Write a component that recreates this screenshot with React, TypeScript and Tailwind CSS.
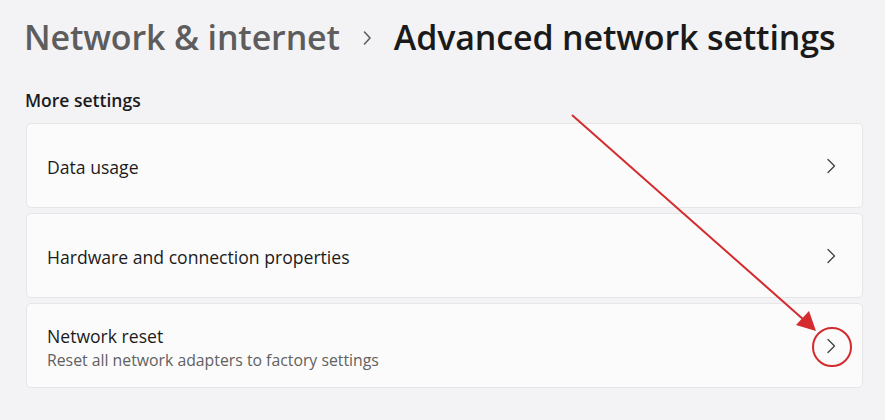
const Chevron = () => (
  <svg width="10" height="16" viewBox="0 0 10 16" className="shrink-0">
    <path d="M2 1.5 L8.5 8 L2 14.5" fill="none" stroke="#3b3b3b" strokeWidth="1.2" strokeLinecap="round" strokeLinejoin="round" />
  </svg>
);

const Row = ({ title, subtitle }: { title: string; subtitle?: string }) => (
  <div className="flex items-center h-[85px] bg-[#fbfbfb] border border-[#e6e6e6] rounded-[5px] pl-[20px] pr-[26px]">
    <div className="flex-1 flex flex-col pt-[3px]">
      <span className="text-[17.6px] leading-[22px] text-[#1b1b1b]">{title}</span>
      {subtitle && <span className="text-[15.8px] leading-[20px] text-[#616161] mt-[3px]">{subtitle}</span>}
    </div>
    <Chevron />
  </div>
);

export default function App() {
  return (
    <div
      className="relative w-[885px] h-[420px] overflow-hidden bg-[#f3f3f5] px-[26px]"
      style={{ fontFamily: '"Open Sans", "Noto Sans", sans-serif' }}
    >
      <div className="flex items-center h-[44px] mt-[15px] -ml-[2px] text-[34px] font-semibold tracking-[-0.15px]">
        <span className="text-[#5d5d5d]">Network &amp; internet</span>
        <svg width="10" height="16" viewBox="0 0 10 16" className="mx-[22px] mt-[2px]">
          <path d="M2.5 2 L8 8 L2.5 14" fill="none" stroke="#5d5d5d" strokeWidth="1.6" strokeLinecap="round" strokeLinejoin="round" />
        </svg>
        <span className="text-[#1a1a1a]">Advanced network settings</span>
      </div>
      <div className="mt-[30px] text-[17.5px] leading-[22px] font-semibold text-[#1b1b1b] -ml-[1px]">More settings</div>
      <div className="mt-[12px] flex flex-col gap-[5px] w-[837px]">
        <Row title="Data usage" />
        <Row title="Hardware and connection properties" />
        <Row title="Network reset" subtitle="Reset all network adapters to factory settings" />
      </div>
      <svg className="absolute inset-0 pointer-events-none" width="885" height="420" viewBox="0 0 885 420">
        <line x1="572" y1="115" x2="804" y2="320" stroke="#d42b2f" strokeWidth="2" />
        <polygon points="816,331 796,325 809,311" fill="#d42b2f" />
        <circle cx="832" cy="347" r="19" fill="none" stroke="#d42b2f" strokeWidth="2" />
      </svg>
    </div>
  );
}
